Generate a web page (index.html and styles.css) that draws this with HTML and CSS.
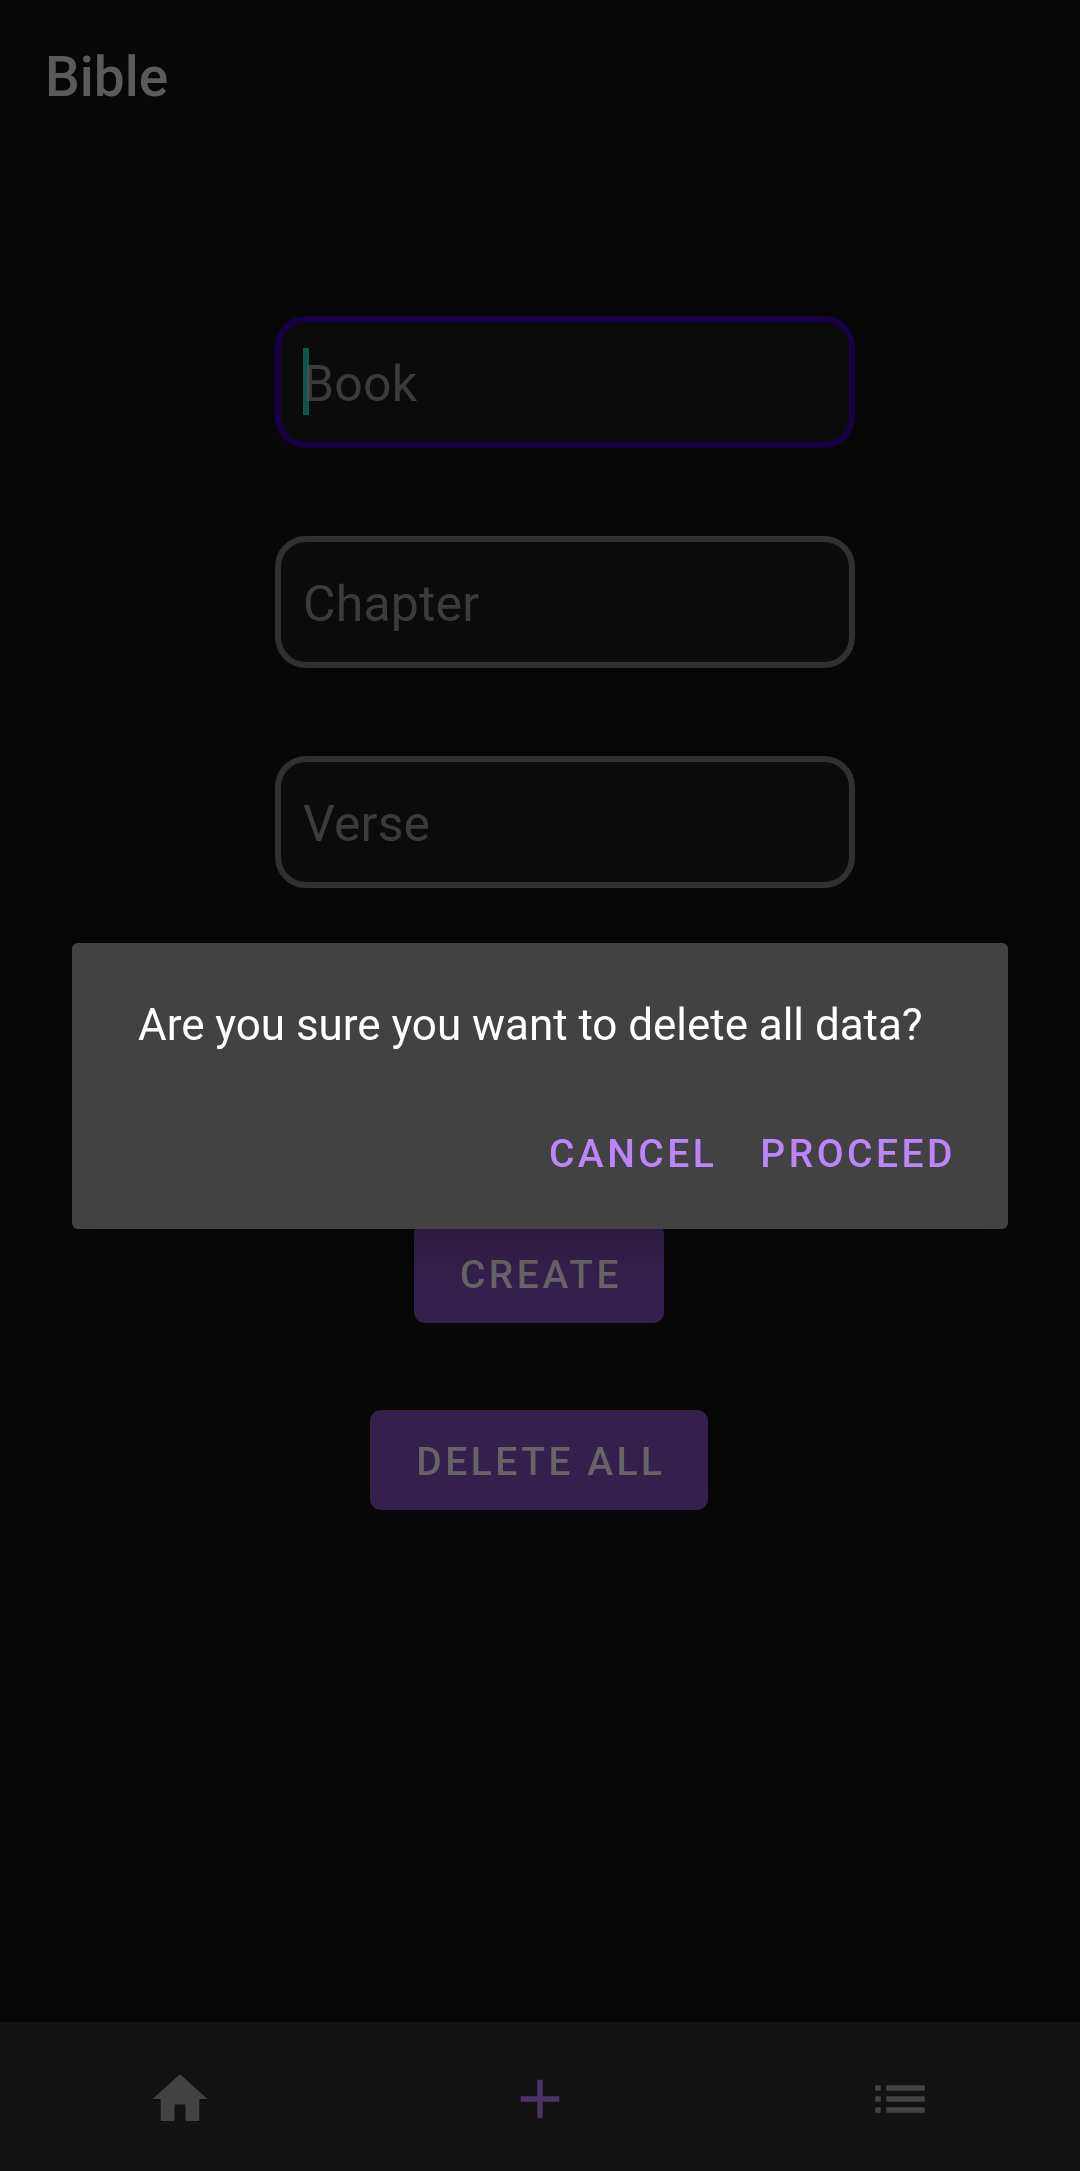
FILE: index.html
```html
<!DOCTYPE html>
<html lang="en">
<head>
<meta charset="utf-8">
<title>Bible</title>
<link rel="stylesheet" href="styles.css">
</head>
<body>
<div class="app">
  <header class="app-bar"><h1 class="title">Bible</h1></header>
  <main class="content">
    <div class="fields">
      <div class="field field-focused"><span class="hint">Book</span><span class="caret"></span></div>
      <div class="field"><span class="hint">Chapter</span></div>
      <div class="field"><span class="hint">Verse</span></div>
    </div>
    <div class="actions">
      <button class="button" type="button">CREATE</button>
      <button class="button" type="button">DELETE ALL</button>
    </div>
  </main>
  <nav class="bottom-nav">
    <a class="nav-item"><svg class="icon" viewBox="0 0 24 24"><path d="M10 20v-6h4v6h5v-8h3L12 3 2 12h3v8z"/></svg></a>
    <a class="nav-item nav-active"><svg class="icon" viewBox="0 0 24 24"><path d="M19 13h-6v6h-2v-6H5v-2h6V5h2v6h6v2z"/></svg></a>
    <a class="nav-item"><svg class="icon" viewBox="0 0 24 24"><path d="M3 13h2v-2H3v2zm0 4h2v-2H3v2zm0-8h2V7H3v2zm4 4h14v-2H7v2zm0 4h14v-2H7v2zM7 7v2h14V7H7z"/></svg></a>
  </nav>
</div>
<div class="dialog" role="dialog">
  <p class="message">Are you sure you want to delete all data?</p>
  <div class="dialog-actions">
    <button class="text-button" type="button">CANCEL</button>
    <button class="text-button" type="button">PROCEED</button>
  </div>
</div>
</body>
</html>
```
FILE: styles.css
```css
* {
  box-sizing: border-box;
}

body {
  margin: 0;
  background: #070707;
  font-family: Roboto, sans-serif;
}

button {
  border: 0;
  font-family: inherit;
  font-size: 39px;
  font-weight: 500;
  letter-spacing: 0.0893em;
  line-height: 45px;
}

.app {
  display: flex;
  flex-direction: column;
  height: 2171px;
}

.app-bar {
  display: flex;
  align-items: center;
  height: 154px;
  padding: 1px 45px 0;
}

.title {
  margin: 0;
  color: #5b5b5b;
  font-size: 55px;
  font-weight: 500;
  line-height: 65px;
}

.content {
  flex: 1;
  display: flex;
  flex-direction: column;
  padding-top: 162px;
}

.fields {
  display: flex;
  flex-direction: column;
  gap: 88px;
  margin-left: 275px;
  width: 580px;
}

.field {
  position: relative;
  display: flex;
  align-items: center;
  height: 132px;
  padding: 4px 22px 0;
  border: 6px solid #303030;
  border-radius: 31px;
  background: #0b0b0b;
}

.field-focused {
  border-color: #180046;
}

.hint {
  color: #3b3b3b;
  font-size: 50px;
  letter-spacing: 0.15px;
  line-height: 58px;
}

.caret {
  position: absolute;
  left: 22px;
  top: 26px;
  width: 6px;
  height: 67px;
  background: #0b574c;
  mix-blend-mode: lighten;
}

.actions {
  display: flex;
  flex-direction: column;
  align-items: center;
  gap: 87px;
  margin-top: 335px;
  padding-right: 2px;
}

.button {
  height: 100px;
  padding: 4px 42px 0 46px;
  border-radius: 11px;
  background: #34204c;
  color: #666369;
}

.bottom-nav {
  display: flex;
  height: 149px;
  background: #121212;
  color: #434343;
}

.nav-item {
  flex: 1;
  display: flex;
  align-items: center;
  justify-content: center;
  padding-top: 5px;
}

.nav-active {
  color: #4b3465;
}

.icon {
  width: 66px;
  height: 66px;
  fill: currentColor;
}

.dialog {
  position: absolute;
  left: 72px;
  top: 943px;
  width: 936px;
  height: 286px;
  padding: 56px 31px 0 66px;
  border-radius: 6px;
  background: #424242;
  box-shadow: 0 20px 36px rgba(0, 0, 0, 0.2);
}

.message {
  margin: 0;
  color: #fff;
  font-size: 44px;
  letter-spacing: -0.04px;
  line-height: 52px;
  white-space: nowrap;
}

.dialog-actions {
  display: flex;
  justify-content: flex-end;
  margin-top: 52px;
}

.text-button {
  height: 99px;
  padding: 3px 21px 0 22px;
  background: transparent;
  color: #bb86fc;
}
```
